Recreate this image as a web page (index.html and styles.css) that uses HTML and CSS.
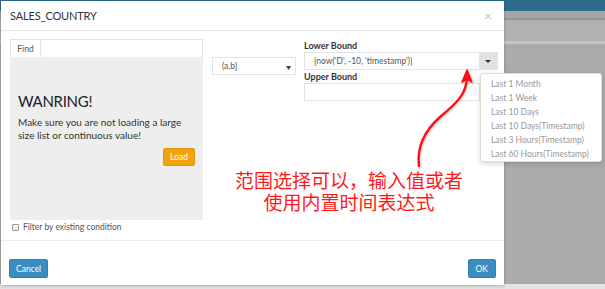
FILE: index.html
```html
<!DOCTYPE html>
<html>
<head>
<meta charset="utf-8">
<link rel="stylesheet" href="styles.css">
</head>
<body>
<div class="backdrop">
  <div class="band band-top"></div>
  <div class="band band-a"></div>
  <div class="band band-b"></div>
  <div class="band band-c"></div>
</div>
<div class="modal">
  <div class="modal-header">
    <span class="title">SALES_COUNTRY</span>
    <span class="close">×</span>
  </div>
  <div class="modal-body">
    <div class="left-col">
      <div class="find-group">
        <span class="find-addon">Find</span>
        <span class="find-input"></span>
      </div>
      <div class="warn-panel">
        <div class="warn-title">WANRING!</div>
        <div class="warn-text">Make sure you are not loading a large size list or continuous value!</div>
        <div class="load-row"><span class="btn btn-load">Load</span></div>
      </div>
      <label class="filter-row"><span class="checkbox"></span>Filter by existing condition</label>
    </div>
    <div class="mid-col">
      <div class="select">
        <span>(a,b]</span>
        <span class="caret-small">▼</span>
      </div>
    </div>
    <div class="right-col">
      <div class="field-label">Lower Bound</div>
      <div class="input-group">
        <span class="input-text">{now('D', -10, 'timestamp')}</span>
        <span class="drop-btn"><span class="caret"></span></span>
      </div>
      <div class="field-label">Upper Bound</div>
      <div class="input-plain"></div>
    </div>
  </div>
  <div class="modal-footer">
    <span class="btn btn-blue">Cancel</span>
    <span class="btn btn-blue">OK</span>
  </div>
  <div class="note"><div class="note-line">范围选择可以，输入值或者</div><div class="note-line">使用内置时间表达式</div></div>
  <svg class="arrow" width="90" height="110" viewBox="0 0 90 110">
    <path d="M19 104 C 17 88, 21 72, 40 55 C 58 40, 66 32, 67 16" fill="none" stroke="#ff1010" stroke-width="2.4" stroke-linecap="round"/>
    <path d="M67 8 L 72 20 L 67 17 L 62 20 Z" fill="#ff1010" stroke="#ff1010" stroke-width="1.5" stroke-linejoin="round"/>
  </svg>
</div>
<ul class="menu">
  <li>Last 1 Month</li>
  <li>Last 1 Week</li>
  <li>Last 10 Days</li>
  <li>Last 10 Days(Timestamp)</li>
  <li>Last 3 Hours(Timestamp)</li>
  <li>Last 60 Hours(Timestamp)</li>
</ul>
</body>
</html>
```

FILE: styles.css
```css
* { box-sizing: border-box; }
html, body { margin: 0; padding: 0; }
body {
  width: 605px;
  height: 289px;
  overflow: hidden;
  position: relative;
  background: #adadad;
  font-family: Lato, "Noto Sans CJK SC", sans-serif;
  color: #333;
}
.backdrop {
  position: absolute;
  inset: 0;
  display: flex;
  flex-direction: column;
}
.band { width: 100%; }
.band-top { height: 11px; background: #2f6b8d; }
.band-a { height: 9px; background: #a5a5a5; border-bottom: 2px solid #959595; }
.band-b { height: 24px; background: #b1b1b1; border-bottom: 3px solid #c4c4c4; }
.band-c { flex: 1; background: #ababab; border-bottom: 5px solid #e4e4e4; }

.modal {
  position: absolute;
  left: 1px;
  top: 1px;
  width: 503px;
  height: 284px;
  background: #fff;
  box-shadow: 0 1px 3px rgba(0,0,0,0.25);
  display: flex;
  flex-direction: column;
}
.modal-header {
  height: 30px;
  border-bottom: 1px solid #e7e7e7;
  display: flex;
  align-items: center;
  justify-content: space-between;
  padding: 0 9px 0 9px;
}
.title { font-size: 11px; color: #333; letter-spacing: -0.15px; }
.close { font-size: 14px; color: #c4c4c4; margin-right: 3px; }

.modal-body {
  height: 210px;
  display: flex;
  padding: 8px 0 0 9px;
  border-bottom: 1px solid #ececec;
}
.left-col { width: 193px; display: flex; flex-direction: column; }
.find-group {
  height: 18px;
  display: flex;
  border: 1px solid #e3e3e3;
  border-bottom: none;
}
.find-addon {
  width: 30px;
  font-size: 8.5px;
  color: #555;
  display: flex;
  align-items: center;
  justify-content: center;
  border-right: 1px solid #e3e3e3;
}
.find-input { flex: 1; }
.warn-panel {
  height: 163px;
  background: #eeeeee;
  padding: 35px 8px 0 8px;
}
.warn-title { font-size: 15px; color: #222; line-height: 18px; letter-spacing: -0.3px; }
.warn-text { font-size: 10px; line-height: 12.5px; color: #333; margin-top: 6px; width: 176px; }
.load-row { display: flex; justify-content: flex-end; margin-top: 7px; }
.btn {
  display: inline-flex;
  align-items: center;
  justify-content: center;
  color: #fff;
  font-size: 8.5px;
  border-radius: 2px;
  height: 18px;
}
.btn-load { background: #f0a30a; border: 1px solid #e39a0a; width: 32px; }
.filter-row {
  display: flex;
  align-items: center;
  font-size: 8.5px;
  color: #555;
  margin-top: 1px;
  margin-left: 2px;
  height: 12px;
}
.checkbox {
  width: 7px; height: 7px;
  border: 1px solid #999;
  border-radius: 1px;
  background: #f4f4f4;
  margin-right: 4px;
}
.mid-col { width: 84px; margin-left: 9px; padding-top: 18px; }
.select {
  height: 18px;
  border: 1px solid #e3e3e3;
  display: flex;
  align-items: center;
  justify-content: space-between;
  padding: 0 4px 0 9px;
  font-size: 8.5px;
  color: #555;
}
.caret-small { font-size: 5px; color: #333; }
.right-col { width: 194px; margin-left: 8px; }
.field-label {
  font-size: 9px;
  font-weight: 700;
  color: #333;
  height: 13px;
  line-height: 13px;
}
.input-group {
  height: 18px;
  display: flex;
  border: 1px solid #e3e3e3;
}
.input-text {
  flex: 1;
  font-size: 8.5px;
  color: #555;
  display: flex;
  align-items: center;
  padding-left: 9px;
}
.drop-btn {
  width: 18px;
  background: #e2e2e2;
  display: flex;
  align-items: center;
  justify-content: center;
}
.caret {
  width: 0; height: 0;
  border-left: 3px solid transparent;
  border-right: 3px solid transparent;
  border-top: 3px solid #333;
}
.input-plain { height: 18px; border: 1px solid #e3e3e3; width: 176px; }

.modal-footer {
  flex: 1;
  display: flex;
  justify-content: space-between;
  align-items: flex-start;
  padding: 18px 8px 0 8px;
}
.btn-blue {
  background: #3b8cc0;
  border: 1px solid #357fad;
  padding: 0 6px;
  height: 19px;
}
.modal-footer .btn-blue:last-child { padding: 0 7px; }

.note {
  position: absolute;
  left: 232px;
  top: 168px;
  width: 232px;
  display: flex;
  flex-direction: column;
  align-items: center;
  color: #ff1a1a;
  font-family: "Noto Sans CJK SC", sans-serif;
  font-size: 19px;
}
.note-line { height: 22px; line-height: 22px; }
.arrow {
  position: absolute;
  left: 399px;
  top: 61px;
  filter: drop-shadow(1px 1px 1px rgba(0,0,0,0.2));
}
.menu {
  position: absolute;
  left: 480px;
  top: 73px;
  width: 122px;
  height: 89px;
  margin: 0;
  padding: 3px 0 0 0;
  list-style: none;
  background: #fff;
  border: 1px solid #ddd;
  border-radius: 3px;
  box-shadow: 0 2px 5px rgba(0,0,0,0.15);
}
.menu li {
  font-size: 8.5px;
  color: #999;
  height: 14px;
  line-height: 14px;
  padding-left: 10px;
  white-space: nowrap;
}
```
